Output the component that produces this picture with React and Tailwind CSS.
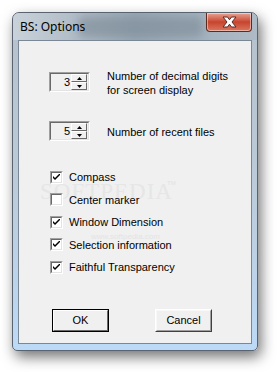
import React from 'react';

const sans = { fontFamily: '"Liberation Sans", Arial, sans-serif' };

function Spinner({ value }) {
  return (
    <div className="flex h-[20px] w-[41px] border border-t-[#a0a0a0] border-l-[#a0a0a0] border-b-white border-r-white">
      <div className="flex flex-1 items-center justify-end border border-t-[#696969] border-l-[#696969] border-b-[#e3e3e3] border-r-[#e3e3e3] bg-[#f0f0f0] pr-[1px]">
        <span className="text-[11px] leading-none text-black">{value}</span>
        <div className="ml-[1px] flex h-full w-[16px] flex-col">
          {['up', 'down'].map((d) => (
            <div
              key={d}
              className="flex flex-1 items-center justify-center border border-t-white border-l-white border-b-[#696969] border-r-[#696969] bg-[#f0f0f0]"
            >
              <svg width="5" height="3" viewBox="0 0 5 3">
                {d === 'up' ? <path d="M2.5 0 L5 3 L0 3 Z" fill="#000" /> : <path d="M0 0 L5 0 L2.5 3 Z" fill="#000" />}
              </svg>
            </div>
          ))}
        </div>
      </div>
    </div>
  );
}

function Check({ checked, label }) {
  return (
    <div className="flex h-[22.5px] items-center">
      <div className="flex h-[13px] w-[13px] items-center justify-center border border-t-[#a0a0a0] border-l-[#a0a0a0] border-b-white border-r-white">
        <div className="flex h-full w-full items-center justify-center border border-t-[#696969] border-l-[#696969] border-b-[#e3e3e3] border-r-[#e3e3e3] bg-white">
          {checked && (
            <svg width="7" height="7" viewBox="0 0 7 7">
              <path d="M0 2 L0 4 L2 6 L7 1 L7 -1 L2 4 Z" fill="#000" />
            </svg>
          )}
        </div>
      </div>
      <span className="relative ml-[6px] text-[11px] text-black">{label}</span>
    </div>
  );
}

export default function App() {
  const opts = [
    ['Compass', true],
    ['Center marker', false],
    ['Window Dimension', true],
    ['Selection information', true],
    ['Faithful Transparency', true],
  ];

  return (
    <div className="h-[372px] w-[279px] overflow-hidden bg-white pl-[12px] pt-[12px]" style={sans}>
      {/* Window */}
      <div className="relative flex h-[339px] w-[246px] flex-col rounded-t-[7px] rounded-b-[5px] border border-[#5a6470] bg-gradient-to-b from-[#b5c1cc] via-[#bccbd9] to-[#bcdaf7] shadow-[3px_6px_14px_rgba(0,0,0,0.55)]">
        {/* Title bar */}
        <div className="relative flex h-[27px] shrink-0 items-center overflow-hidden rounded-t-[6px] pl-[7px]">
          <div className="absolute inset-0 bg-gradient-to-r from-[#c9d2da] via-[#98a7b4] to-[#aebbc7]" />
          <div className="absolute left-[65px] top-[4px] h-[20px] w-[125px] rounded-[6px] bg-[#7d8b97] opacity-60 blur-[4px]" />
          <span className="relative text-[12px] text-black" style={{ fontFamily: '"Noto Sans", "Open Sans", sans-serif' }}>
            BS: Options
          </span>
          {/* Close button */}
          <div className="absolute right-[5px] top-0 flex h-[19px] w-[46px] items-center justify-center rounded-b-[4px] border border-t-0 border-[#5d2a22] bg-gradient-to-b from-[#e5a395] via-[#c8432d] to-[#d9765f] shadow-[inset_0_0_0_1px_rgba(255,255,255,0.45)]">
            <svg width="15" height="12" viewBox="0 0 15 12">
              <path
                d="M1 1 H5.5 L7.5 3.8 L9.5 1 H14 L10 6 L14 11 H9.5 L7.5 8.2 L5.5 11 H1 L5 6 Z"
                fill="#fff"
                stroke="#5a2b26"
                strokeWidth="1"
                strokeLinejoin="round"
              />
            </svg>
          </div>
        </div>

        {/* Content */}
        <div className="relative mx-[5px] mb-[6px] flex flex-1 flex-col border border-[#7a8896] bg-[#f0f0f0] pl-[30px] pt-[31px]">
          {/* watermark */}
          <span
            className="pointer-events-none absolute left-[21px] top-[139px] text-[23px] leading-none tracking-[1px] text-[#e6e6e6]"
            style={{ fontFamily: '"Liberation Serif", serif' }}
          >
            SOFTPEDIA
          </span>
          <span className="pointer-events-none absolute left-[148px] top-[139px] text-[6px] leading-none text-[#e2e2e2]">TM</span>
          <span className="pointer-events-none absolute left-[72px] top-[192px] text-[8px] leading-none text-[#e4e4e4]">www.softpedia.com</span>

          <div className="relative flex items-start">
            <Spinner value="3" />
            <div className="ml-[17px] mt-[-3px] text-[11px] leading-[14px] text-black">
              Number of decimal digits
              <br />
              for screen display
            </div>
          </div>
          <div className="relative mt-[24px] flex items-center">
            <Spinner value="5" />
            <span className="ml-[17px] mt-[3px] text-[11px] text-black">Number of recent files</span>
          </div>

          <div className="relative mt-[25px] ml-[1px] flex flex-col">
            {opts.map(([l, c]) => (
              <Check key={l} label={l} checked={c} />
            ))}
          </div>

          <div className="relative mt-[30px] ml-[3px] flex">
            <div className="flex h-[23px] w-[57px] items-center justify-center border border-black">
              <div className="flex h-full w-full items-center justify-center border border-t-white border-l-white border-b-[#696969] border-r-[#696969] bg-[#f0f0f0] text-[11px] text-black">
                OK
              </div>
            </div>
            <div className="ml-[46px] flex h-[23px] w-[57px] items-center justify-center border border-t-white border-l-white border-b-[#404040] border-r-[#404040]">
              <div className="flex h-full w-full items-center justify-center border border-t-[#f8f8f8] border-l-[#f8f8f8] border-b-[#a0a0a0] border-r-[#a0a0a0] bg-[#f0f0f0] text-[11px] text-black">
                Cancel
              </div>
            </div>
          </div>
        </div>
      </div>
    </div>
  );
}
